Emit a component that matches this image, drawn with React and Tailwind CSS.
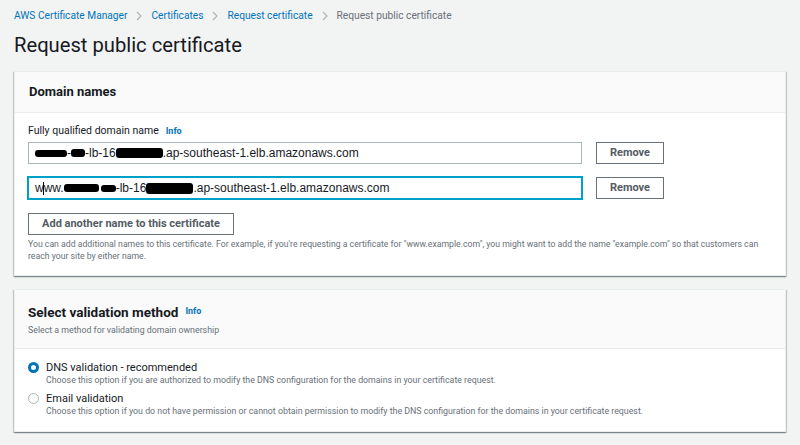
import React from "react";

const font = { fontFamily: 'Roboto, "Noto Sans", Arial, sans-serif' };

function Chevron() {
  return (
    <svg width="8" height="10" viewBox="0 0 8 10" className="mx-[8px]">
      <path d="M2 1l4 4-4 4" fill="none" stroke="#aab7b8" strokeWidth="1.2" />
    </svg>
  );
}

function Blob({ w, h = 9 }) {
  return (
    <span
      className="inline-block bg-black align-middle rounded-[3px]"
      style={{ width: w, height: h }}
    />
  );
}

function Panel({ children }) {
  return (
    <div className="bg-white border border-[#eaeded] shadow-[0_1px_1px_0_rgba(0,28,36,0.3),1px_1px_1px_0_rgba(0,28,36,0.15),-1px_1px_1px_0_rgba(0,28,36,0.15)]">
      {children}
    </div>
  );
}

function DomainRow({ focused, children }) {
  return (
    <div className="flex items-center gap-[14px]">
      <div
        className={`w-[554px] h-[22px] flex items-center pl-[6px] bg-white text-[12px] text-[#16191f] ${
          focused ? "border border-[#00a1c9] shadow-[0_0_0_1px_#00a1c9]" : "border border-[#aab7b8]"
        }`}
        style={{ fontFamily: '"Liberation Sans", Arial, sans-serif' }}
      >
        {children}
      </div>
      <button className="w-[68px] h-[22px] border border-[#687078] bg-white text-[11px] font-bold text-[#545b64]">
        Remove
      </button>
    </div>
  );
}

function Radio({ checked, label, desc }) {
  return (
    <div className="flex items-start gap-[7px]">
      <div className="pt-[1px]">
        {checked ? (
          <div className="w-[11px] h-[11px] rounded-full border-[3px] border-[#0073bb] bg-white" />
        ) : (
          <div className="w-[11px] h-[11px] rounded-full border border-[#aab7b8] bg-white" />
        )}
      </div>
      <div>
        <div className="text-[11px] leading-[13px] text-[#16191f]">{label}</div>
        <div className="text-[8.8px] leading-[13px] text-[#687078]">{desc}</div>
      </div>
    </div>
  );
}

export default function App() {
  return (
    <div className="w-[800px] h-[445px] overflow-hidden bg-[#f2f3f3] px-[14px] pt-[9px]" style={font}>
      <nav className="flex items-center text-[10.2px] leading-[14px]">
        <span className="text-[#0073bb]">AWS Certificate Manager</span>
        <Chevron />
        <span className="text-[#0073bb]">Certificates</span>
        <Chevron />
        <span className="text-[#0073bb]">Request certificate</span>
        <Chevron />
        <span className="text-[#687078]">Request public certificate</span>
      </nav>
      <h1 className="mt-[8px] text-[20.2px] leading-[28px] text-[#16191f] font-normal">Request public certificate</h1>

      <div className="mt-[12px]">
        <Panel>
          <div className="h-[41px] bg-[#fafafa] border-b border-[#eaeded] flex items-center px-[14px]">
            <h2 className="text-[13px] font-bold text-[#16191f]">Domain names</h2>
          </div>
          <div className="pl-[13px] pr-[6px] pt-[11px] pb-[13px]">
            <div className="flex items-center gap-[7px] text-[10.5px] leading-[14px] text-[#16191f]">
              <span>Fully qualified domain name</span>
              <span className="text-[9px] font-bold text-[#0073bb]">Info</span>
            </div>
            <div className="mt-[4px] flex flex-col gap-[13px]">
              <DomainRow>
                <Blob w={32} h={7} />
                <span>-</span>
                <Blob w={14} h={8} />
                <span>-lb-16</span>
                <Blob w={47} h={10} />
                <span>.ap-southeast-1.elb.amazonaws.com</span>
              </DomainRow>
              <DomainRow focused>
                <span>w</span>
                <span className="inline-block w-px h-[13px] bg-black -mx-[0.5px]" />
                <span>ww.</span>
                <Blob w={35} h={8} />
                <span className="w-[2px]" />
                <Blob w={15} h={7} />
                <span>-lb-16</span>
                <Blob w={47} h={11} />
                <span>.ap-southeast-1.elb.amazonaws.com</span>
              </DomainRow>
            </div>
            <button className="mt-[14px] w-[206px] h-[22px] border border-[#687078] bg-white text-[11px] font-bold text-[#545b64]">
              Add another name to this certificate
            </button>
            <p className="mt-[3px] text-[8.7px] leading-[12px] text-[#687078]">
              You can add additional names to this certificate. For example, if you're requesting a certificate for "www.example.com", you might want to add the name "example.com" so that customers can reach your site by either name.
            </p>
          </div>
        </Panel>
      </div>

      <div className="mt-[13px]">
        <Panel>
          <div className="h-[59px] bg-[#fafafa] border-b border-[#eaeded] px-[13px] pt-[13px]">
            <div className="flex items-center gap-[7px]">
              <h2 className="text-[13.5px] leading-[18px] font-bold text-[#16191f]">Select validation method</h2>
              <span className="text-[9px] font-bold text-[#0073bb]">Info</span>
            </div>
            <div className="text-[8.8px] leading-[14px] text-[#687078] mt-[2px]">
              Select a method for validating domain ownership
            </div>
          </div>
          <div className="px-[13px] pt-[12px] pb-[13px] flex flex-col gap-[5px]">
            <Radio
              checked
              label="DNS validation - recommended"
              desc="Choose this option if you are authorized to modify the DNS configuration for the domains in your certificate request."
            />
            <Radio
              label="Email validation"
              desc="Choose this option if you do not have permission or cannot obtain permission to modify the DNS configuration for the domains in your certificate request."
            />
          </div>
        </Panel>
      </div>

      <div className="mt-[14px]">
        <Panel>
          <div className="h-[40px] bg-[#fafafa]" />
        </Panel>
      </div>
    </div>
  );
}
